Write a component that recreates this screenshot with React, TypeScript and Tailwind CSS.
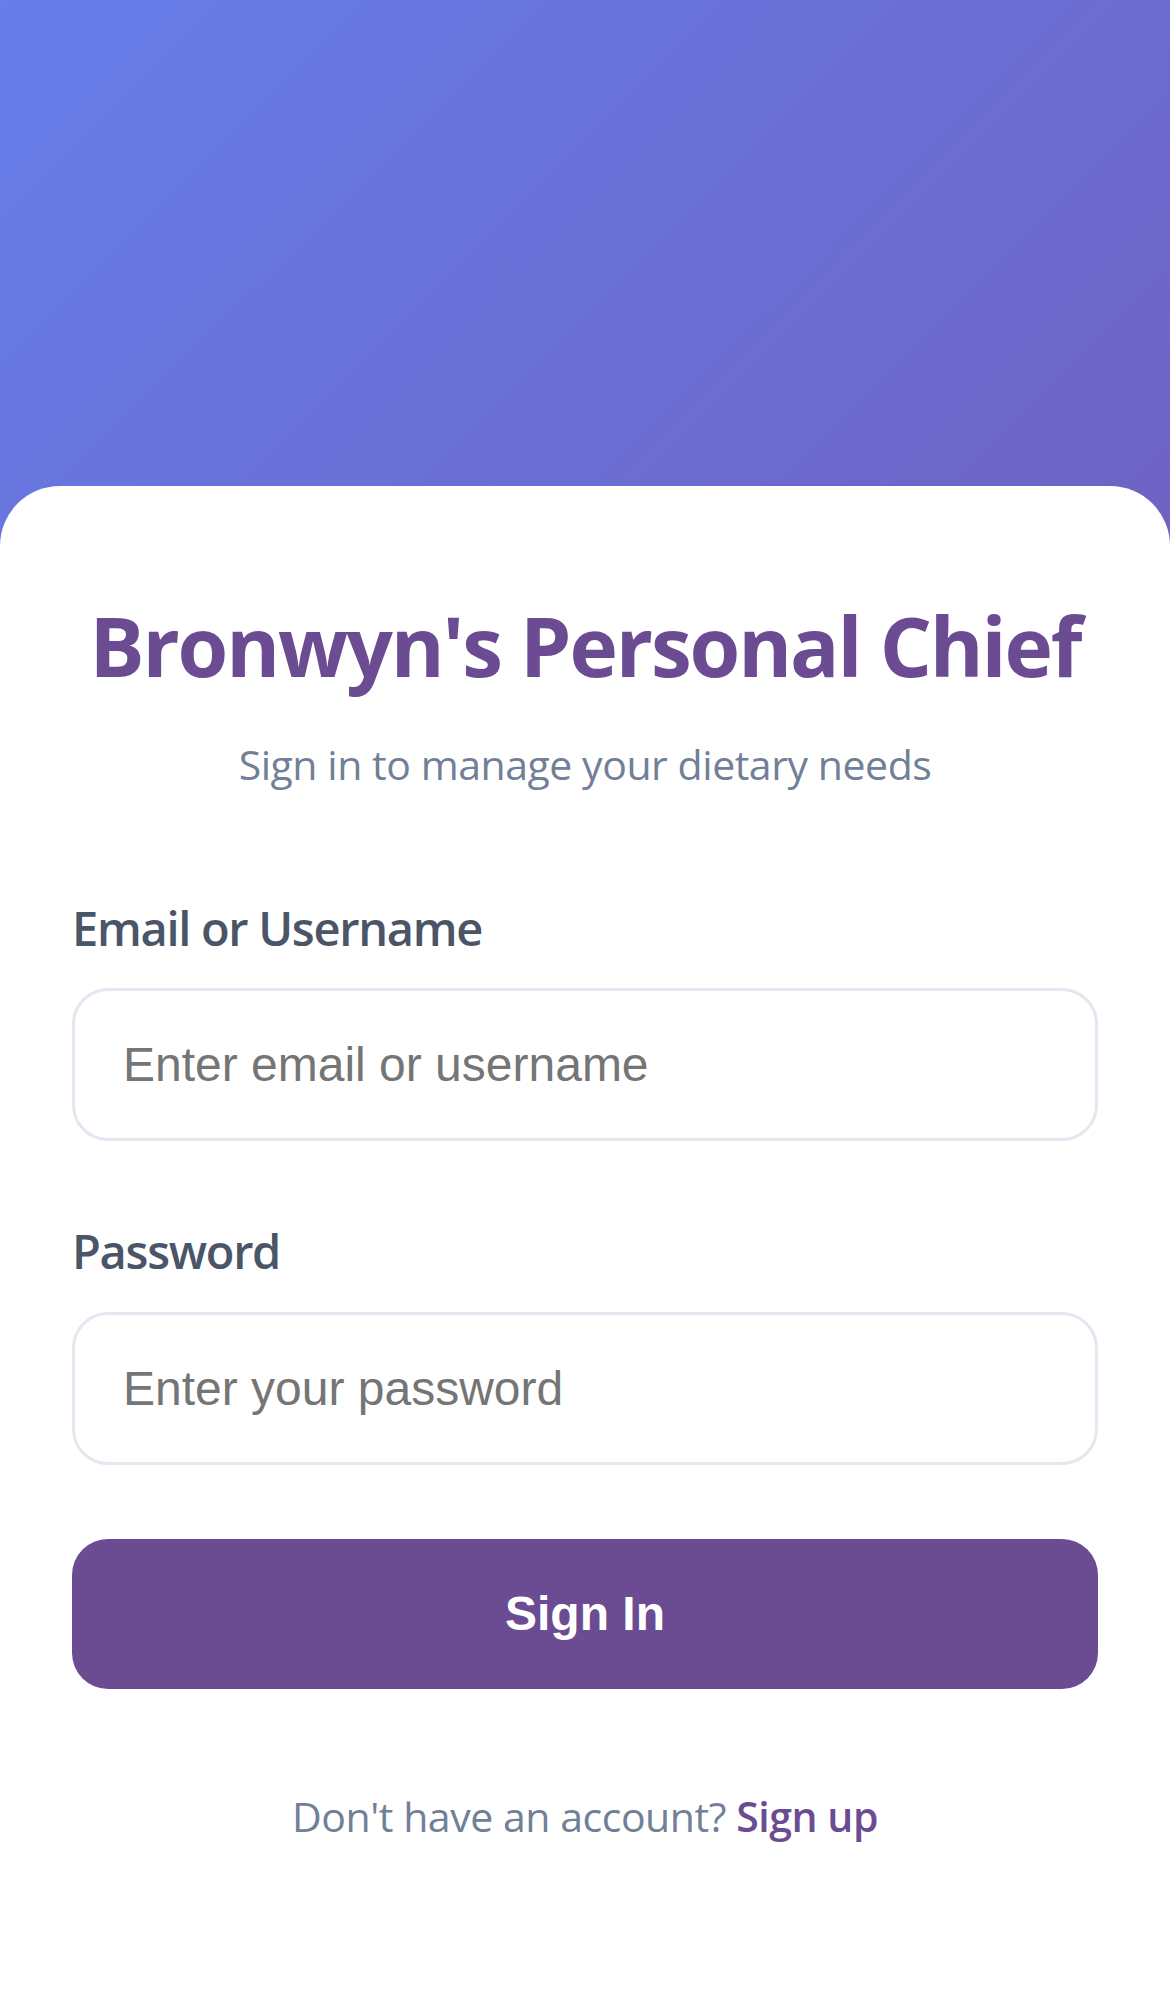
import React from "react";

export default function App() {
  return (
    <div className="min-h-[1992px] w-full flex flex-col bg-[linear-gradient(135deg,#667eea_0%,#764ba2_100%)]" style={{ fontFamily: '"Open Sans", "Noto Sans", sans-serif' }}>
      <div className="h-[486px] shrink-0" />
      <div className="flex-1 bg-white rounded-t-[60px] px-[72px] pt-[109px] flex flex-col">
        <h1 className="text-center text-[82px] leading-[100px] font-bold text-[#6b4c93] tracking-[-2.1px]">
          Bronwyn's Personal Chief
        </h1>
        <p className="mt-[39px] text-center text-[41px] leading-[60px] text-[#718096] tracking-[-0.45px]">
          Sign in to manage your dietary needs
        </p>
        <label className="mt-[104px] block text-[47px] leading-[60px] font-semibold text-[#4a5568] tracking-[-1.3px]">
          Email or Username
        </label>
        <input
          type="text"
          placeholder="Enter email or username"
          className="mt-[30px] h-[153px] w-full rounded-[36px] border-[3px] border-[#e2e8f0] bg-white px-[48px] text-[48px] text-[#2d3748] placeholder:text-[#757575] outline-none"
          style={{ fontFamily: '"Liberation Sans", Arial, sans-serif' }}
        />
        <label className="mt-[80px] block text-[47px] leading-[60px] font-semibold text-[#4a5568] tracking-[-1.3px]">
          Password
        </label>
        <input
          type="password"
          placeholder="Enter your password"
          className="mt-[31px] h-[153px] w-full rounded-[36px] border-[3px] border-[#e2e8f0] bg-white px-[48px] text-[48px] text-[#2d3748] placeholder:text-[#757575] outline-none"
          style={{ fontFamily: '"Liberation Sans", Arial, sans-serif' }}
        />
        <button
          type="button"
          className="mt-[74px] h-[150px] w-full rounded-[36px] bg-[#6b4c93] text-white text-[48px] font-bold leading-[150px] pb-[4px]"
          style={{ fontFamily: '"Liberation Sans", Arial, sans-serif' }}
        >
          Sign In
        </button>
        <p className="mt-[97px] text-center text-[41px] leading-[60px] text-[#718096] tracking-[-0.45px]">
          Don't have an account?{" "}
          <a className="font-semibold text-[#6b4c93]" href="#">
            Sign up
          </a>
        </p>
      </div>
    </div>
  );
}
